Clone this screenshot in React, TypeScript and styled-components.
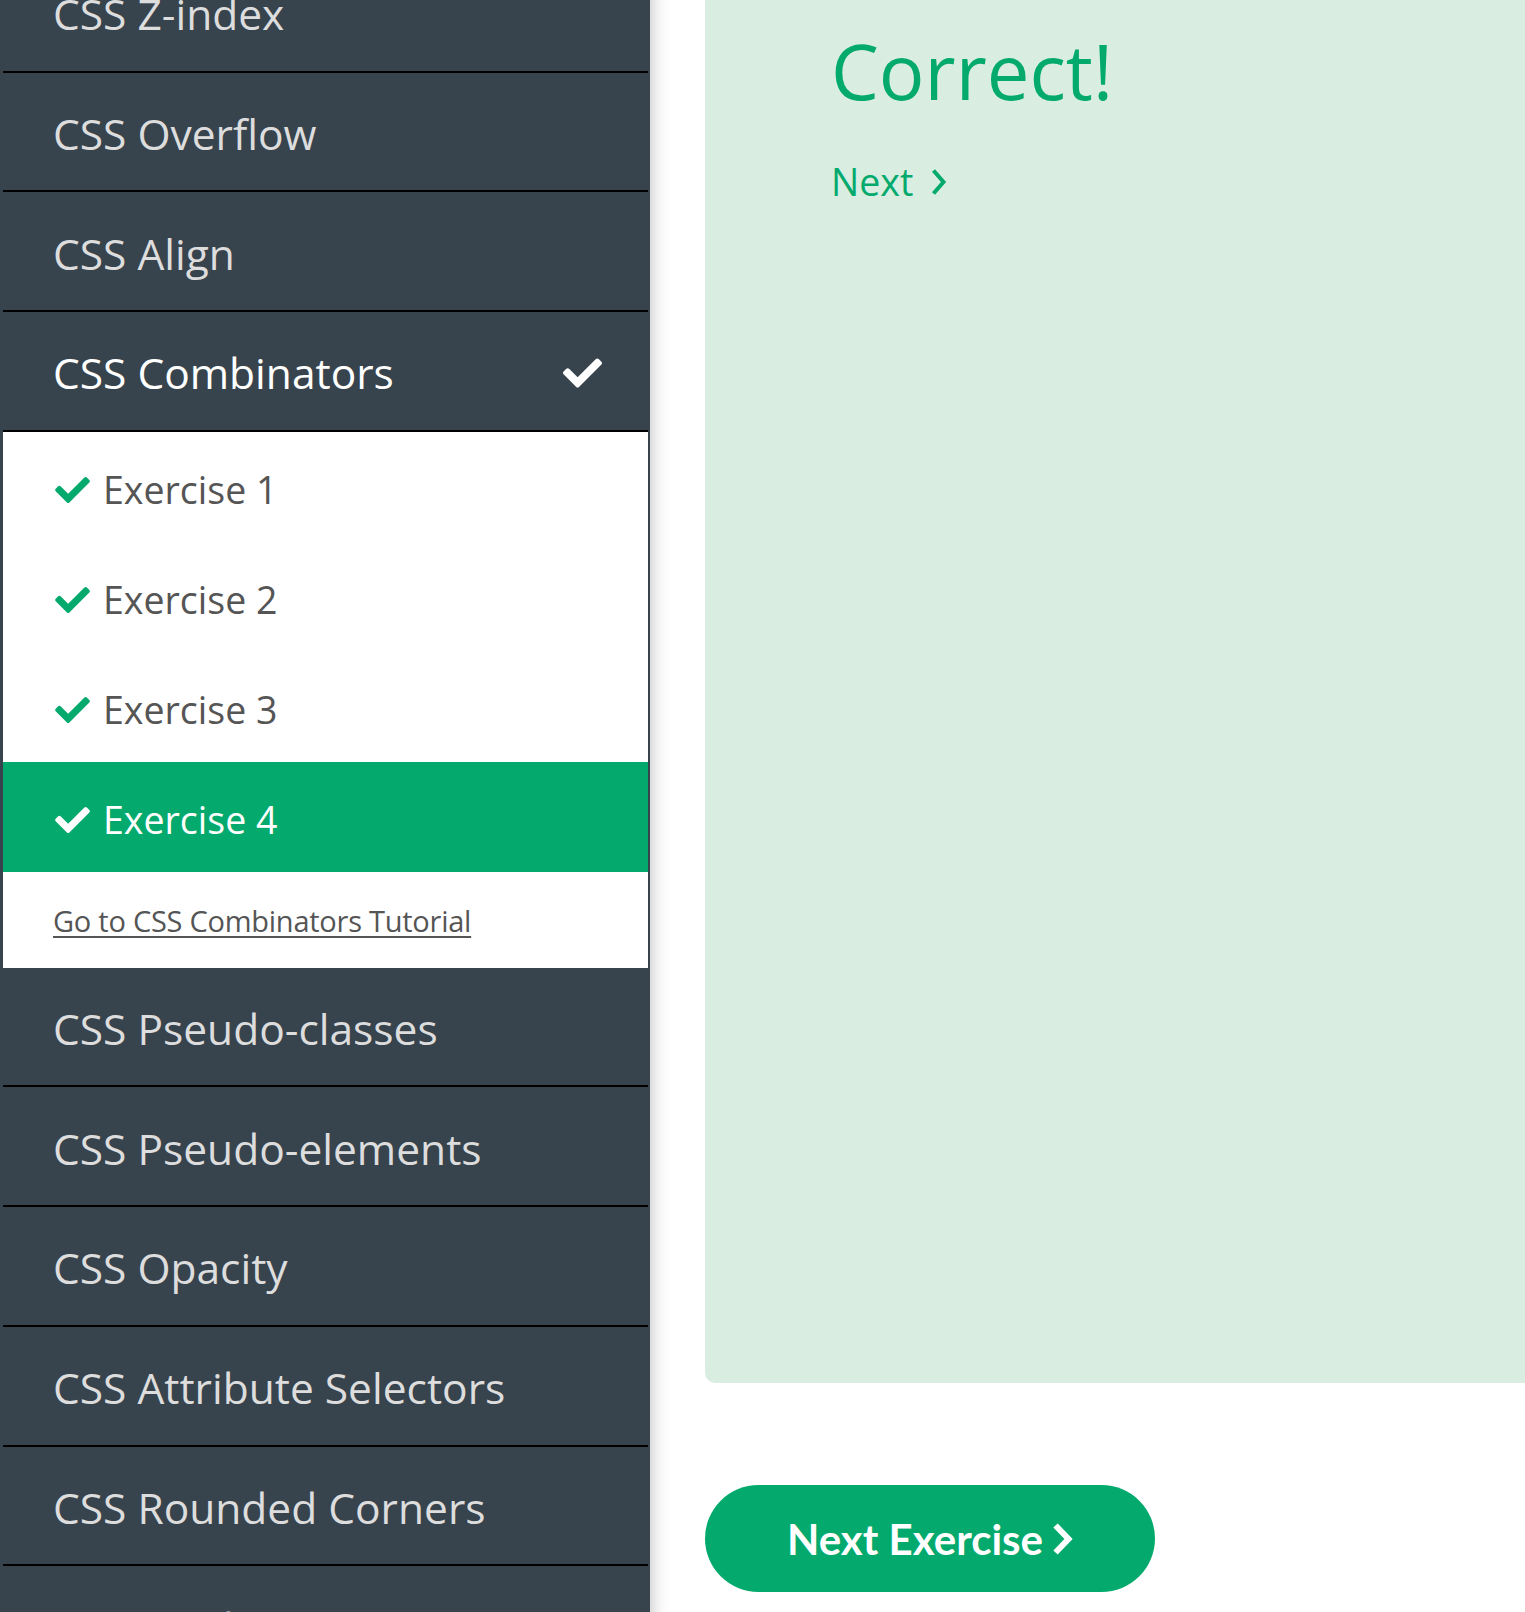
import React from "react";
import styled, { createGlobalStyle } from "styled-components";

const GlobalStyle = createGlobalStyle`
  html, body {
    margin: 0;
    padding: 0;
    background: #ffffff;
    overflow: hidden;
  }
  body {
    font-family: "Open Sans", "DejaVu Sans", sans-serif;
  }
`;

const GREEN = "#04aa6d";

const Page = styled.div`
  display: flex;
  align-items: flex-start;
  width: 1525px;
  margin-top: -47px; /* page is scrolled down */
`;

const Sidebar = styled.nav`
  flex: 0 0 650px;
  box-sizing: border-box;
  padding: 0 2px 0 3px;
  background: #38444d;
  box-shadow: 0 0 18px rgba(0, 0, 0, 0.28);
  position: relative;
  z-index: 1;
`;

const NavItem = styled.div<{ $active?: boolean }>`
  box-sizing: border-box;
  height: 119.7px;
  padding: 4px 46px 0 50px;
  display: flex;
  align-items: center;
  justify-content: space-between;
  border-bottom: 2px solid #000;
  font-size: 42.5px;
  color: ${(p) => (p.$active ? "#ffffff" : "#dddddd")};
  white-space: nowrap;
`;

const ExercisePanel = styled.div`
  background: #ffffff;
`;

const ExerciseRow = styled.div<{ $active?: boolean }>`
  box-sizing: border-box;
  height: 110px;
  padding: 6px 0 0 52px;
  display: flex;
  align-items: center;
  gap: 13px;
  font-size: 37.5px;
  background: ${(p) => (p.$active ? GREEN : "transparent")};
  color: ${(p) => (p.$active ? "#ffffff" : "#555555")};
`;

const LinkRow = styled.div`
  box-sizing: border-box;
  height: 96px;
  padding: 2px 0 0 50px;
  display: flex;
  align-items: center;
`;

const TutorialLink = styled.a`
  font-size: 29px;
  letter-spacing: -0.25px;
  color: #555555;
  text-decoration: underline;
  text-decoration-thickness: 2px;
  text-underline-offset: 4px;
`;

const Main = styled.main`
  flex: 1;
  padding-left: 55px;
  display: flex;
  flex-direction: column;
  align-items: flex-start;
`;

const ResultPanel = styled.section`
  align-self: stretch;
  box-sizing: border-box;
  height: 1430px;
  padding: 80px 0 0 126px;
  background: #d9eee1;
  border-bottom-left-radius: 10px;
`;

const Heading = styled.h2`
  margin: 0;
  font-size: 76px;
  line-height: 1;
  font-weight: 400;
  color: ${GREEN};
`;

const NextLink = styled.a`
  display: flex;
  align-items: center;
  gap: 18px;
  margin-top: 54px;
  font-size: 37.5px;
  line-height: 1;
  color: ${GREEN};
  text-decoration: none;
`;

const NextButton = styled.button`
  margin-top: 102px;
  width: 450px;
  height: 107px;
  border: none;
  border-radius: 54px;
  background: ${GREEN};
  color: #ffffff;
  font-family: "Lato", "DejaVu Sans", sans-serif;
  font-weight: 700;
  font-size: 42px;
  display: flex;
  align-items: center;
  justify-content: center;
  gap: 9px;
  padding: 0;
`;

const ChevronSvg = styled.svg`
  flex-shrink: 0;
  fill: none;
  stroke: currentColor;
  stroke-linejoin: miter;
  stroke-linecap: butt;
`;

function Chevron({ w, h, sw }: { w: number; h: number; sw: number }) {
  const pad = sw / 2 + 0.5;
  return (
    <ChevronSvg width={w} height={h} viewBox={`0 0 ${w} ${h}`} strokeWidth={sw} aria-hidden="true">
      <polyline points={`${pad},${pad} ${w - pad - 1},${h / 2} ${pad},${h - pad}`} />
    </ChevronSvg>
  );
}

const CheckSvg = styled.svg<{ $color: string }>`
  flex-shrink: 0;
  fill: ${(p) => p.$color};
`;

const CHECK_PATH =
  "M173.898 439.404l-166.4-166.4c-9.997-9.997-9.997-26.206 0-36.204l36.203-36.204c9.997-9.998 26.207-9.998 36.204 0L192 312.69 432.095 72.596c9.997-9.997 26.207-9.997 36.204 0l36.203 36.204c9.997 9.997 9.997 26.206 0 36.204l-294.4 294.401c-9.998 9.997-26.207 9.997-36.204-.001z";

function Check({ w, h, color }: { w: number; h: number; color: string }) {
  return (
    <CheckSvg $color={color} width={w} height={h} viewBox="0 64 512 384" aria-hidden="true">
      <path d={CHECK_PATH} />
    </CheckSvg>
  );
}

const before = ["CSS Z-index", "CSS Overflow", "CSS Align"];
const after = [
  "CSS Pseudo-classes",
  "CSS Pseudo-elements",
  "CSS Opacity",
  "CSS Attribute Selectors",
  "CSS Rounded Corners",
  "CSS Border Images",
];
const exercises = ["Exercise 1", "Exercise 2", "Exercise 3", "Exercise 4"];

export default function App() {
  return (
    <>
      <GlobalStyle />
      <Page>
        <Sidebar>
          {before.map((t) => (
            <NavItem key={t}>{t}</NavItem>
          ))}
          <NavItem $active>
            <span>CSS Combinators</span>
            <Check w={39} h={30} color="#ffffff" />
          </NavItem>
          <ExercisePanel>
            {exercises.map((t, i) => {
              const active = i === exercises.length - 1;
              return (
                <ExerciseRow key={t} $active={active}>
                  <Check w={35} h={26} color={active ? "#ffffff" : GREEN} />
                  <span>{t}</span>
                </ExerciseRow>
              );
            })}
            <LinkRow>
              <TutorialLink href="#">Go to CSS Combinators Tutorial</TutorialLink>
            </LinkRow>
          </ExercisePanel>
          {after.map((t) => (
            <NavItem key={t}>{t}</NavItem>
          ))}
        </Sidebar>
        <Main>
          <ResultPanel>
            <Heading>Correct!</Heading>
            <NextLink href="#">
              <span>Next</span>
              <Chevron w={16} h={28} sw={4} />
            </NextLink>
          </ResultPanel>
          <NextButton type="button">
            <span>Next Exercise</span>
            <Chevron w={21} h={34} sw={6} />
          </NextButton>
        </Main>
      </Page>
    </>
  );
}
